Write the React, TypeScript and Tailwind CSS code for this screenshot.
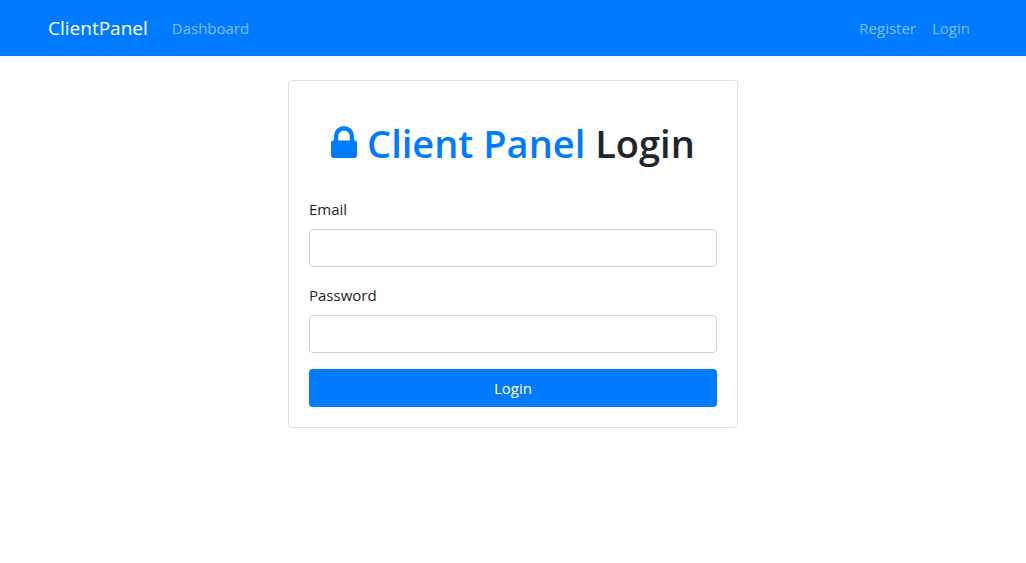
function LockIcon() {
  return (
    <svg
      viewBox="0 128 1152 1408"
      fill="currentColor"
      aria-hidden="true"
      className="inline h-8 w-[26px] align-baseline"
    >
      <path d="M320 768h512v-192q0-106-75-181t-181-75-181 75-75 181v192zm832 96v576q0 40-28 68t-68 28h-960q-40 0-68-28t-28-68v-576q0-40 28-68t68-28h32v-192q0-184 132-316t316-132 316 132 132 316v192h32q40 0 68 28t28 68z" />
    </svg>
  );
}

function Navbar() {
  return (
    <nav className="bg-[#007bff] px-4 py-2">
      <div className="mx-auto flex h-10 w-full max-w-[960px] items-center px-[15px]">
        <a href="#home" className="mr-6 text-[19px] leading-[30px] text-white">
          ClientPanel
        </a>
        <a href="#dashboard" className="text-white/50">
          Dashboard
        </a>
        <div className="ml-auto flex gap-4 pr-2">
          <a href="#register" className="text-white/50">
            Register
          </a>
          <a href="#login" className="text-white/50">
            Login
          </a>
        </div>
      </div>
    </nav>
  );
}

function Field({ id, label, type }: { id: string; label: string; type: string }) {
  return (
    <div className="mb-4">
      <label htmlFor={id} className="mb-2 block">
        {label}
      </label>
      <input
        id={id}
        type={type}
        className="block h-[38px] w-full rounded border border-[#ced4da] bg-white px-3 text-[#495057] outline-none focus:border-[#80bdff]"
      />
    </div>
  );
}

export default function App() {
  return (
    <div className="font-['Segoe_UI','Open_Sans','Noto_Sans',sans-serif] text-[15px] leading-6 text-[#212529]">
      <Navbar />
      <main className="mx-auto mt-6 w-full max-w-[450px]">
        <div className="rounded border border-[#dfdfdf] bg-white p-5">
          <h1 className="pt-[18px] pb-[30px] text-center text-[38px] leading-[48px] font-semibold">
            <span className="text-[#007bff]">
              <LockIcon /> Client Panel
            </span>{" "}
            Login
          </h1>
          <form onSubmit={(event) => event.preventDefault()}>
            <Field id="email" label="Email" type="email" />
            <Field id="password" label="Password" type="password" />
            <button type="submit" className="block h-[38px] w-full rounded bg-[#007bff] text-white">
              Login
            </button>
          </form>
        </div>
      </main>
    </div>
  );
}
